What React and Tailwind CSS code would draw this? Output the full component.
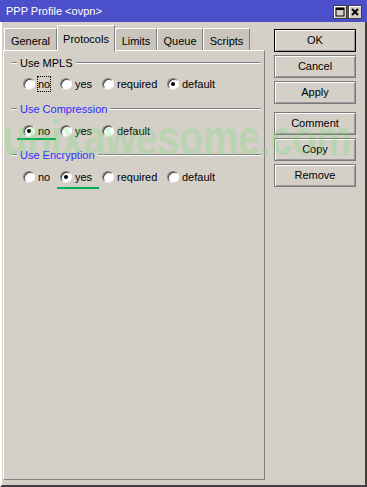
import React from "react";

const font = { fontFamily: '"Liberation Sans", Arial, sans-serif' };

const Radio = ({ label, checked, focus, width, mark }) => (
  <div className={`relative flex items-center h-[16px] ${width}`}>
    <span className="w-[12px] h-[12px] rounded-full bg-white border border-t-[#808080] border-l-[#808080] border-r-white border-b-[#e8e6e0] shadow-[inset_1px_1px_0_#404040] flex items-center justify-center shrink-0">
      {checked && <span className="w-[4px] h-[4px] rounded-full bg-black" />}
    </span>
    <span
      className={`ml-[2px] px-[1px] h-[16px] flex items-center text-[11px] text-black ${
        focus ? "outline outline-1 outline-dotted outline-black -outline-offset-1" : ""
      }`}
    >
      {label}
    </span>
    {mark && (
      <span className={`absolute top-[15px] h-[2px] bg-[#00b050] ${mark}`} />
    )}
  </div>
);

const GroupLabel = ({ text, blue, className }) => (
  <div className={`flex items-center h-[14px] ${className}`}>
    <span className="w-[6px] ml-[7px] border-t border-[#808080] border-b border-b-white" />
    <span className={`mx-[3px] text-[11px] ${blue ? "text-[#2d2dff]" : "text-black"}`}>
      {text}
    </span>
    <span className="flex-1 mr-[3px] border-t border-[#808080] border-b border-b-white" />
  </div>
);

const Tab = ({ label, width, active }) =>
  active ? (
    <div
      className={`${width} h-[26px] -mb-px relative z-10 bg-[#d4d0c8] border-t border-l border-white border-r border-r-[#808080] flex justify-center pt-[5px] text-[11px]`}
    >
      {label}
    </div>
  ) : (
    <div
      className={`${width} h-[22px] bg-[#c9c5bd] border-t border-l border-white border-r border-r-[#808080] flex justify-center pt-[4px] text-[11px]`}
    >
      {label}
    </div>
  );

const Button = ({ label, primary, className = "" }) => (
  <div
    className={`h-[23px] flex items-center justify-center text-[11px] text-black bg-[#d4d0c8] border ${
      primary ? "border-black" : "border-[#7a7a7a]"
    } shadow-[inset_1px_1px_0_#fff,inset_-1px_-1px_0_#9a9a9a] ${className}`}
  >
    {label}
  </div>
);

const TitleButton = ({ children }) => (
  <div className="w-[14px] h-[14px] bg-[#d4d0c8] border border-[#404040] shadow-[inset_1px_1px_0_#fff] flex items-center justify-center">
    {children}
  </div>
);

export default function App() {
  return (
    <div
      className="relative w-[367px] h-[487px] bg-[#d4d0c8] flex flex-col overflow-hidden"
      style={font}
    >
      <div className="h-[22px] bg-[#4b4fc9] flex items-center shrink-0">
        <span className="ml-[6px] text-white text-[11px]">PPP Profile &lt;ovpn&gt;</span>
        <div className="ml-auto mr-[5px] flex gap-[1px] mt-[1px]">
          <TitleButton>
            <svg width="10" height="10" viewBox="0 0 10 10">
              <rect x="1" y="1" width="8" height="8" fill="none" stroke="#000" strokeWidth="1" />
              <rect x="1" y="1" width="8" height="2" fill="#000" />
            </svg>
          </TitleButton>
          <TitleButton>
            <svg width="10" height="10" viewBox="0 0 10 10">
              <path d="M2 2 L8 8 M8 2 L2 8" stroke="#000" strokeWidth="2" />
            </svg>
          </TitleButton>
        </div>
      </div>

      <div className="flex-1 flex border-l-2 border-l-white border-r-2 border-r-[#404040] border-b-2 border-b-[#404040]">
        <div className="ml-[1px] w-[262px] flex flex-col">
          <div className="h-[28px] flex items-end pl-[1px]">
            <Tab label="General" width="w-[53px]" />
            <Tab label="Protocols" width="w-[58px]" active />
            <Tab label="Limits" width="w-[42px]" />
            <Tab label="Queue" width="w-[46px]" />
            <Tab label="Scripts" width="w-[47px]" />
          </div>
          <div className="h-[430px] bg-[#d4d0c8] border-t border-l border-white border-r border-r-[#808080] border-b border-b-[#808080]">
            <GroupLabel text="Use MPLS" className="mt-[5px]" />
            <div className="flex pl-[19px] mt-[6px]">
              <Radio label="no" focus width="w-[37px]" />
              <Radio label="yes" width="w-[42px]" />
              <Radio label="required" width="w-[65px]" />
              <Radio label="default" checked />
            </div>

            <GroupLabel text="Use Compression" blue className="mt-[10px]" />
            <div className="flex pl-[19px] mt-[7px]">
              <Radio label="no" checked width="w-[37px]" mark="-left-[6px] w-[39px]" />
              <Radio label="yes" width="w-[42px]" />
              <Radio label="default" />
            </div>

            <GroupLabel text="Use Encryption" blue className="mt-[9px]" />
            <div className="flex pl-[19px] mt-[7px]">
              <Radio label="no" width="w-[37px]" />
              <Radio label="yes" checked width="w-[42px]" mark="-left-[3px] top-[18px] w-[42px]" />
              <Radio label="required" width="w-[65px]" />
              <Radio label="default" />
            </div>
          </div>
        </div>

        <div className="ml-[9px] w-[82px] flex flex-col pt-[7px]">
          <Button label="OK" primary />
          <Button label="Cancel" className="mt-[3px]" />
          <Button label="Apply" className="mt-[3px]" />
          <Button label="Comment" className="mt-[8px]" />
          <Button label="Copy" className="mt-[3px]" />
          <Button label="Remove" className="mt-[3px]" />
        </div>
      </div>

      <div className="absolute left-[3px] top-[112px] pointer-events-none select-none text-[40px] font-bold leading-none tracking-[-0.5px] text-[rgba(110,220,110,0.25)] scale-y-125 origin-top-left whitespace-nowrap">
        unixawesome.com
      </div>
    </div>
  );
}
